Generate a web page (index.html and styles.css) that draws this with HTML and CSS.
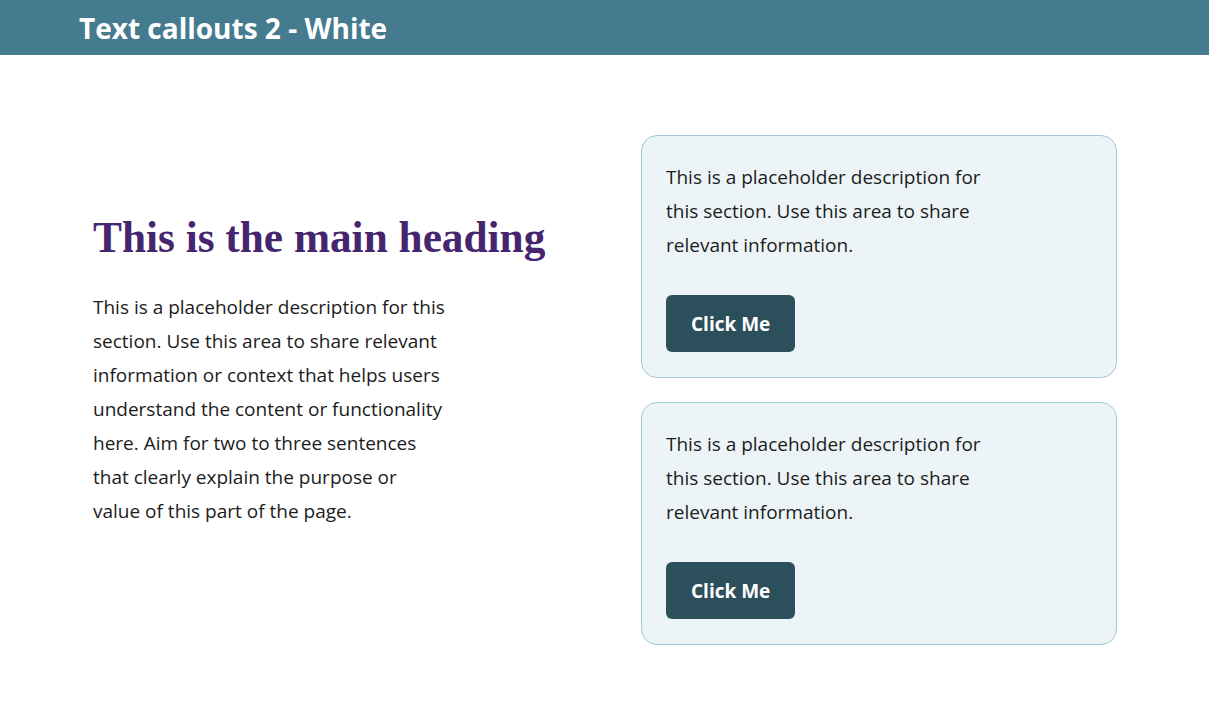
FILE: index.html
```html
<!DOCTYPE html>
<html lang="en">
<head>
<meta charset="utf-8">
<title>Text callouts 2 - White</title>
<link rel="stylesheet" href="styles.css">
</head>
<body>
<header class="topbar">
  <h1 class="topbar-title">Text callouts 2 - White</h1>
</header>
<main class="section">
  <div class="intro">
    <h2 class="intro-heading">This is the main heading</h2>
    <p class="intro-text">This is a placeholder description for this section. Use this area to share relevant information or context that helps users understand the content or functionality here. Aim for two to three sentences that clearly explain the purpose or value of this part of the page.</p>
  </div>
  <div class="callouts">
    <div class="callout">
      <p class="callout-text">This is a placeholder description for this section. Use this area to share relevant information.</p>
      <button class="btn" type="button">Click Me</button>
    </div>
    <div class="callout">
      <p class="callout-text">This is a placeholder description for this section. Use this area to share relevant information.</p>
      <button class="btn" type="button">Click Me</button>
    </div>
  </div>
</main>
</body>
</html>
```
FILE: styles.css
```css
* { box-sizing: border-box; }
html, body { margin: 0; padding: 0; background: #ffffff; }
body { font-family: "Open Sans", "Noto Sans", sans-serif; color: #1c1c1c; }

.topbar {
  height: 55px;
  background: #457b8f;
  display: flex;
  align-items: center;
  padding-left: 79px;
}
.topbar-title {
  margin: 0;
  color: #ffffff;
  font-size: 28px;
  font-weight: 700;
  line-height: 1;
}

.section {
  display: grid;
  grid-template-columns: 476px 476px;
  justify-content: space-between;
  padding: 80px 92px 75px 93px;
}

.intro { padding-top: 75px; }
.intro-heading {
  margin: 0 0 26px;
  font-family: "Liberation Serif", "DejaVu Serif", serif;
  font-weight: 700;
  font-size: 43.3px;
  line-height: 54px;
  color: #46256f;
}
.intro-text {
  margin: 0;
  max-width: 354px;
  font-size: 19px;
  line-height: 34px;
}

.callouts {
  display: flex;
  flex-direction: column;
  gap: 24px;
}
.callout {
  background: #edf4f7;
  border: 1px solid #9fcad8;
  border-radius: 16px;
  padding: 24px 24px 25px;
}
.callout-text {
  margin: 0 0 33px;
  max-width: 336px;
  font-size: 19px;
  line-height: 34px;
}
.btn {
  display: block;
  height: 57px;
  padding: 0 25px;
  border: 0;
  border-radius: 6px;
  background: #2c4f5c;
  color: #ffffff;
  font-family: "Open Sans", "Noto Sans", sans-serif;
  font-size: 19px;
  font-weight: 700;
}
```
